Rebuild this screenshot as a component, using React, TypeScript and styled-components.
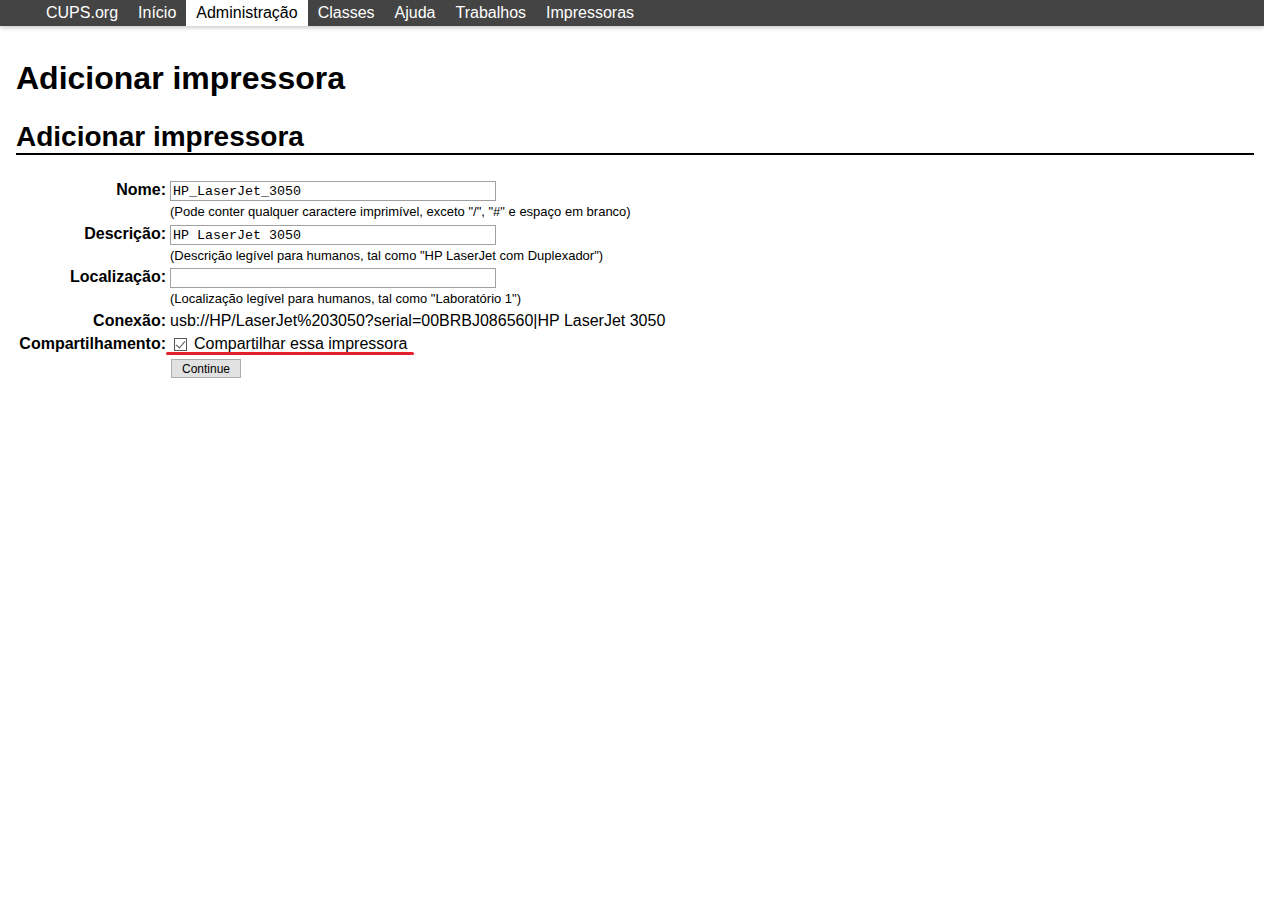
import React from "react";
import styled, { createGlobalStyle } from "styled-components";

const Global = createGlobalStyle`
  html, body { margin: 0; padding: 0; background: #fff; }
  body { font-family: "Liberation Sans", Arial, sans-serif; color: #000; }
`;

const NavBar = styled.nav`
  display: flex;
  height: 26px;
  padding-left: 36px;
  background: #444;
  box-shadow: 0 2px 4px rgba(0, 0, 0, 0.2);
`;

const NavItem = styled.a<{ $active?: boolean }>`
  display: block;
  padding: 0 10px;
  font-size: 16px;
  line-height: 26px;
  text-decoration: none;
  color: ${(p) => (p.$active ? "#000" : "#fff")};
  background: ${(p) => (p.$active ? "#fff" : "transparent")};
`;

const Main = styled.main`
  padding: 0 10px 0 16px;
`;

const H1 = styled.h1`
  margin: 34px 0 0;
  font-size: 32px;
  font-weight: bold;
  line-height: 37px;
`;

const H2 = styled.h2`
  margin: 24px 0 0;
  font-size: 28px;
  font-weight: bold;
  line-height: 32px;
  border-bottom: 2px solid #000;
`;

const Form = styled.form`
  display: grid;
  grid-template-columns: 150px auto;
  column-gap: 4px;
  row-gap: 4px;
  margin-top: 26px;
  align-items: start;
`;

const Label = styled.label<{ $top?: number }>`
  text-align: right;
  font-weight: bold;
  font-size: 16px;
  line-height: 18px;
  white-space: nowrap;
  padding-top: ${(p) => p.$top ?? 0}px;
`;

const Cell = styled.div<{ $pad?: number; $top?: number }>`
  display: flex;
  flex-direction: column;
  align-items: flex-start;
  padding-top: ${(p) => p.$top ?? 0}px;
  padding-bottom: ${(p) => p.$pad ?? 0}px;
`;

const TextInput = styled.input`
  box-sizing: border-box;
  width: 326px;
  height: 20px;
  margin: 0;
  padding: 1px 2px;
  border: 1px solid #a0a0a0;
  font-family: "Liberation Mono", "Courier New", monospace;
  font-size: 13.333px;
  color: #000;
  background: #fff;
`;

const Help = styled.small`
  display: block;
  margin-top: 3px;
  font-size: 13px;
  line-height: 15px;
`;

const Value = styled.div`
  font-size: 16px;
  line-height: 18px;
  white-space: nowrap;
`;

const CheckLabel = styled.label`
  position: relative;
  display: flex;
  align-items: center;
  gap: 7px;
  font-size: 16px;
  line-height: 18px;
  padding-left: 4px;
`;

const Check = styled.input`
  appearance: none;
  position: relative;
  box-sizing: border-box;
  width: 13px;
  height: 13px;
  margin: 0;
  border: 1px solid #555;
  background: #fff;
  &:checked::after {
    content: "";
    position: absolute;
    left: 3px;
    top: 0px;
    width: 4px;
    height: 8px;
    border: solid #555;
    border-width: 0 1.5px 1.5px 0;
    transform: rotate(40deg);
  }
`;

const Underline = styled.span`
  position: absolute;
  left: -4px;
  top: 17px;
  width: 248px;
  height: 3px;
  border-radius: 2px;
  background: #e3202b;
`;

const Empty = styled.div``;

const Button = styled.button`
  margin-top: 2px;
  margin-left: 1px;
  height: 19px;
  width: 70px;
  padding: 0;
  font-family: "Liberation Sans", Arial, sans-serif;
  font-size: 12px;
  color: #000;
  background: #e1e1e1;
  border: 1px solid #adadad;
`;

export default function App() {
  const tabs = ["CUPS.org", "Início", "Administração", "Classes", "Ajuda", "Trabalhos", "Impressoras"];
  return (
    <>
      <Global />
      <NavBar>
        {tabs.map((t) => (
          <NavItem key={t} href="#" $active={t === "Administração"}>
            {t}
          </NavItem>
        ))}
      </NavBar>
      <Main>
        <H1>Adicionar impressora</H1>
        <H2>Adicionar impressora</H2>
        <Form onSubmit={(e) => e.preventDefault()}>
          <Label>Nome:</Label>
          <Cell $pad={2}>
            <TextInput defaultValue="HP_LaserJet_3050" />
            <Help>(Pode conter qualquer caractere imprimível, exceto "/", "#" e espaço em branco)</Help>
          </Cell>
          <Label>Descrição:</Label>
          <Cell $pad={1}>
            <TextInput defaultValue="HP LaserJet 3050" />
            <Help>(Descrição legível para humanos, tal como "HP LaserJet com Duplexador")</Help>
          </Cell>
          <Label>Localização:</Label>
          <Cell $pad={2}>
            <TextInput defaultValue="" />
            <Help>(Localização legível para humanos, tal como "Laboratório 1")</Help>
          </Cell>
          <Label>Conexão:</Label>
          <Value>usb://HP/LaserJet%203050?serial=00BRBJ086560|HP LaserJet 3050</Value>
          <Label $top={1}>Compartilhamento:</Label>
          <Cell $top={1}>
            <CheckLabel>
              <Check type="checkbox" defaultChecked />
              Compartilhar essa impressora
              <Underline />
            </CheckLabel>
          </Cell>
          <Empty />
          <Cell>
            <Button type="submit">Continue</Button>
          </Cell>
        </Form>
      </Main>
    </>
  );
}
